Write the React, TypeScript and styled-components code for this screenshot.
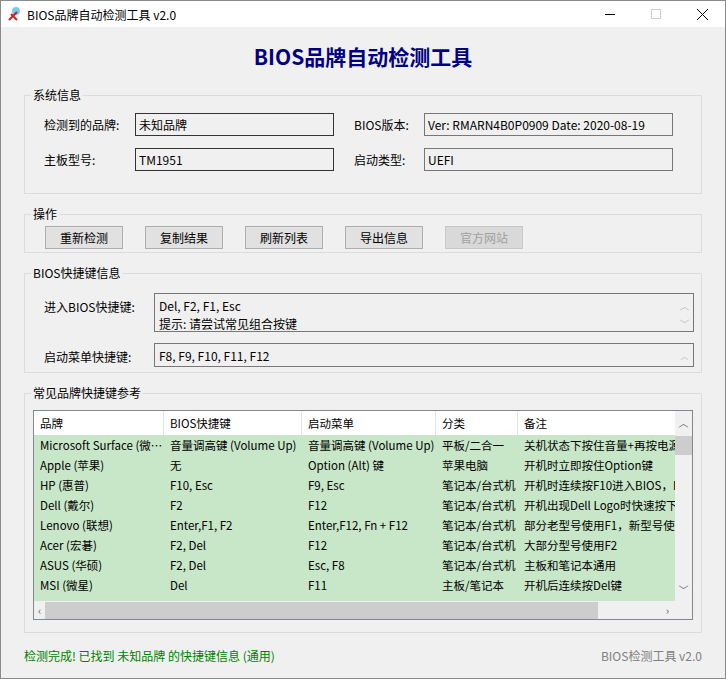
import React from 'react';
import styled, { createGlobalStyle } from 'styled-components';

const G = createGlobalStyle`
  html,body{margin:0;padding:0;}
  body{font-family:"Microsoft YaHei","Noto Sans CJK SC","Noto Sans",sans-serif;font-size:12px;color:#000;}
  *{box-sizing:border-box;}
`;
const Win = styled.div`width:726px;height:679px;border:1px solid #8a8a8a;background:#f0f0f0;display:flex;flex-direction:column;overflow:hidden;`;
const TitleBar = styled.div`height:26px;background:#fff;display:flex;align-items:center;padding-left:6px;flex-shrink:0;`;
const TitleText = styled.div`flex:1;margin-left:4px;font-size:12px;`;
const Ctl = styled.div<{dim?:boolean}>`width:46px;height:26px;display:flex;align-items:center;justify-content:center;color:${p=>p.dim?'#ccc':'#000'};`;
const Body = styled.div`flex:1;padding:0 23px 0 23px;display:flex;flex-direction:column;`;
const Heading = styled.h1`margin:15px 0 0;height:28px;text-align:center;font-size:21px;font-weight:bold;color:#000080;line-height:28px;`;
const Group = styled.fieldset<{h:number;mt:number}>`margin:${p=>p.mt}px 0 0;border:1px solid #dcdcdc;padding:0;height:${p=>p.h}px;position:relative;display:flex;flex-direction:column;`;
const Legend = styled.legend`padding:0 2px;margin-left:6px;font-size:12px;line-height:14px;`;
const InfoGrid = styled.div`display:grid;grid-template-columns:91px 199px 20px 70px 249px;row-gap:12px;padding:11px 0 0 19px;align-items:center;`;
const Lbl = styled.div`font-size:12px;`;
const Box = styled.div<{dark?:boolean}>`height:23px;border:1px solid ${p=>p.dark?'#333':'#777'};display:flex;align-items:center;padding-left:3px;background:#f0f0f0;`;
const Btns = styled.div`display:flex;gap:22px;padding:5px 0 0 20px;`;
const Btn = styled.div<{disabled?:boolean}>`width:78px;height:23px;border:1px solid ${p=>p.disabled?'#c8c8c8':'#adadad'};background:${p=>p.disabled?'#d9d9d9':'#e1e1e1'};color:${p=>p.disabled?'#a0a0a0':'#000'};display:flex;align-items:center;justify-content:center;`;
const KRow = styled.div<{mt:number}>`display:flex;align-items:flex-start;margin-top:${p=>p.mt}px;padding-left:19px;`;
const KLbl = styled.div`width:110px;padding-top:5px;`;
const KBox = styled.div<{h:number}>`width:540px;height:${p=>p.h}px;border:1px solid #777;display:flex;padding:3px 0 0 4px;line-height:18px;`;
const KText = styled.div`flex:1;`;
const VScroll = styled.div`width:17px;display:flex;flex-direction:column;justify-content:space-between;align-items:center;color:#bbb;font-size:10px;padding-bottom:2px;`;
const List = styled.div`margin:10px 0 0 8px;width:660px;height:210px;border:1px solid #828790;background:#c8e6c8;position:relative;overflow:hidden;font-size:11.5px;`;
const Table = styled.div`width:642px;`;
const HRow = styled.div`display:grid;grid-template-columns:130px 138px 134px 82px 158px;height:24px;background:#fff;`;
const HCell = styled.div`padding-left:6px;display:flex;align-items:center;border-right:1px solid #e5e5e5;white-space:nowrap;overflow:hidden;`;
const Row = styled.div`display:grid;grid-template-columns:130px 138px 134px 82px 158px;height:20px;`;
const Cell = styled.div`padding-left:6px;display:flex;align-items:center;white-space:nowrap;overflow:hidden;`;
const VBar = styled.div`position:absolute;right:0;top:0;width:17px;height:190px;background:#f0f0f0;display:flex;flex-direction:column;align-items:center;color:#606060;font-size:10px;`;
const Thumb = styled.div`width:17px;height:19px;background:#cdcdcd;margin-top:6px;`;
const HBar = styled.div`position:absolute;left:0;bottom:0;width:641px;height:18px;background:#f0f0f0;display:flex;align-items:center;color:#606060;`;
const HThumb = styled.div`width:553px;height:17px;background:#cdcdcd;margin-left:4px;`;
const Corner = styled.div`position:absolute;right:0;bottom:0;width:17px;height:18px;background:#f0f0f0;`;
const Status = styled.div`display:flex;justify-content:space-between;margin:14px 0 0;font-size:12px;`;
const Green = styled.span`color:#008000;`;
const Gray = styled.span`color:#808080;`;

const rows = [
  ['Microsoft Surface (微…','音量调高键 (Volume Up)','音量调高键 (Volume Up)','平板/二合一','关机状态下按住音量+再按电源'],
  ['Apple (苹果)','无','Option (Alt) 键','苹果电脑','开机时立即按住Option键'],
  ['HP (惠普)','F10, Esc','F9, Esc','笔记本/台式机','开机时连续按F10进入BIOS，Esc'],
  ['Dell (戴尔)','F2','F12','笔记本/台式机','开机出现Dell Logo时快速按下'],
  ['Lenovo (联想)','Enter,F1, F2','Enter,F12, Fn + F12','笔记本/台式机','部分老型号使用F1，新型号使用'],
  ['Acer (宏碁)','F2, Del','F12','笔记本/台式机','大部分型号使用F2'],
  ['ASUS (华硕)','F2, Del','Esc, F8','笔记本/台式机','主板和笔记本通用'],
  ['MSI (微星)','Del','F11','主板/笔记本','开机后连续按Del键'],
  ['','','','…',''],
];

export default function App(){
  return <Win><G/>
    <TitleBar>
      <svg width="16" height="16" viewBox="0 0 16 16"><circle cx="9" cy="5" r="4" fill="#7ec8f0"/><path d="M2 14 L10 6 M4 8 L10 14" stroke="#d02020" strokeWidth="2"/></svg>
      <TitleText>BIOS品牌自动检测工具 v2.0</TitleText>
      <Ctl><svg width="10" height="10"><path d="M0 5.5H10" stroke="#000"/></svg></Ctl>
      <Ctl dim><svg width="10" height="10"><rect x="0.5" y="0.5" width="9" height="9" fill="none" stroke="#ccc"/></svg></Ctl>
      <Ctl><svg width="11" height="11"><path d="M0 0L11 11M11 0L0 11" stroke="#000"/></svg></Ctl>
    </TitleBar>
    <Body>
      <Heading>BIOS品牌自动检测工具</Heading>
      <Group h={106} mt={18}>
        <Legend>系统信息</Legend>
        <InfoGrid>
          <Lbl>检测到的品牌:</Lbl><Box dark>未知品牌</Box><div/><Lbl>BIOS版本:</Lbl><Box>Ver: RMARN4B0P0909 Date: 2020-08-19</Box>
          <Lbl>主板型号:</Lbl><Box dark>TM1951</Box><div/><Lbl>启动类型:</Lbl><Box>UEFI</Box>
        </InfoGrid>
      </Group>
      <Group h={46} mt={13}>
        <Legend>操作</Legend>
        <Btns>
          <Btn>重新检测</Btn><Btn>复制结果</Btn><Btn>刷新列表</Btn><Btn>导出信息</Btn><Btn disabled>官方网站</Btn>
        </Btns>
      </Group>
      <Group h={107} mt={13}>
        <Legend>BIOS快捷键信息</Legend>
        <KRow mt={13}><KLbl>进入BIOS快捷键:</KLbl><KBox h={39}><KText>Del, F2, F1, Esc<br/>提示: 请尝试常见组合按键</KText><VScroll><span>︿</span><span>﹀</span></VScroll></KBox></KRow>
        <KRow mt={11}><KLbl>启动菜单快捷键:</KLbl><KBox h={24}><KText>F8, F9, F10, F11, F12</KText><VScroll><span style={{fontSize:8}}>︿</span></VScroll></KBox></KRow>
      </Group>
      <Group h={247} mt={13}>
        <Legend>常见品牌快捷键参考</Legend>
        <List>
          <Table>
            <HRow><HCell>品牌</HCell><HCell>BIOS快捷键</HCell><HCell>启动菜单</HCell><HCell>分类</HCell><HCell>备注</HCell></HRow>
            {rows.map((r,i)=><Row key={i}>{r.map((c,j)=><Cell key={j}>{c}</Cell>)}</Row>)}
          </Table>
          <VBar><span style={{marginTop:4}}>︿</span><Thumb/><span style={{marginTop:'auto',marginBottom:4}}>﹀</span></VBar>
          <HBar><span style={{marginLeft:4,fontSize:11}}>‹</span><HThumb/><span style={{marginLeft:'auto',marginRight:6,fontSize:11}}>›</span></HBar>
          <Corner/>
        </List>
      </Group>
      <Status><Green>检测完成! 已找到 未知品牌 的快捷键信息 (通用)</Green><Gray>BIOS检测工具 v2.0</Gray></Status>
    </Body>
  </Win>;
}
